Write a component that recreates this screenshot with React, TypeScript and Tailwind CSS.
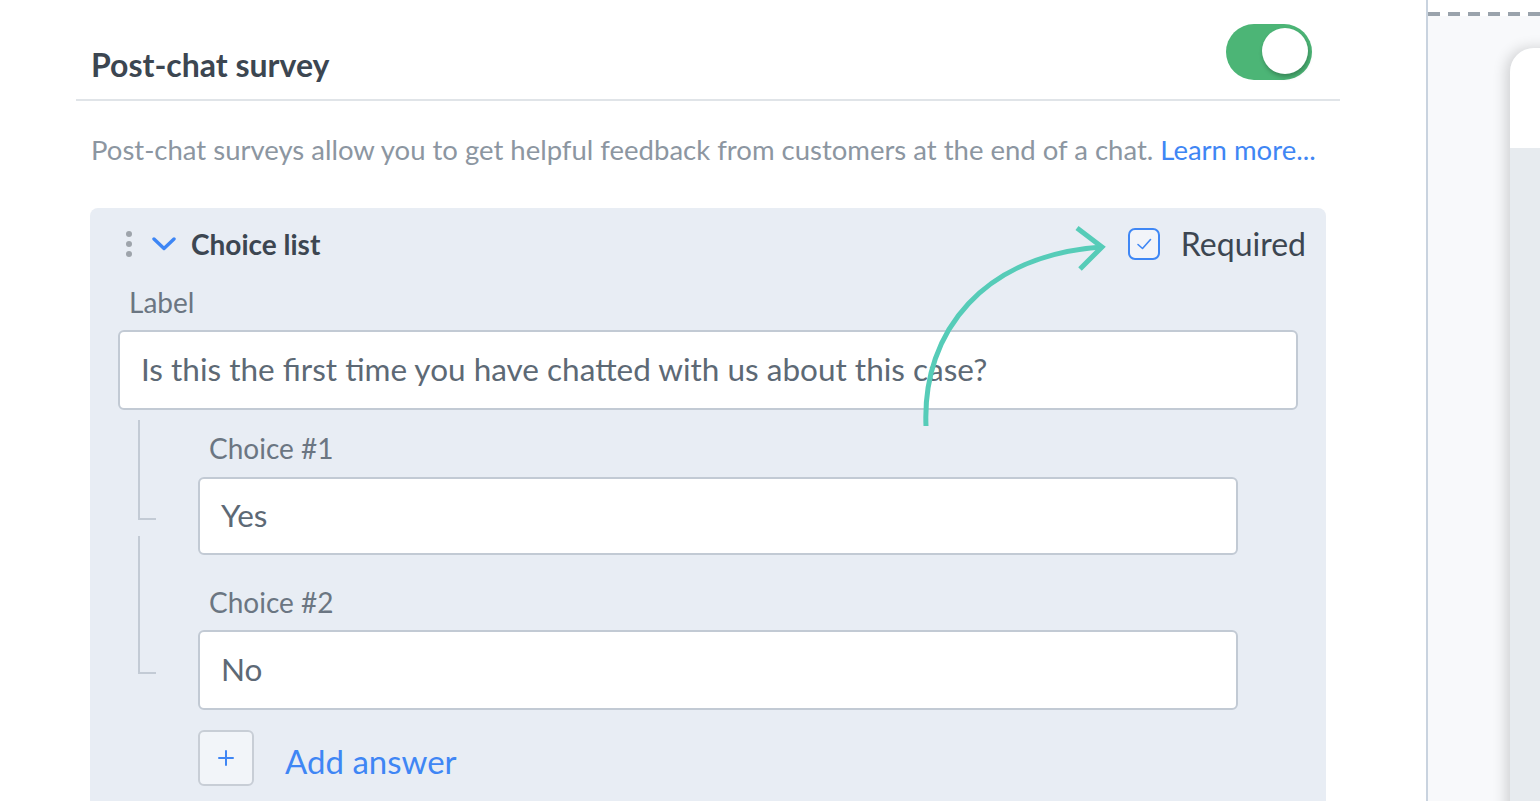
import React from "react";

function Toggle() {
  return (
    <div className="relative mt-[24px] h-[56px] w-[86px] rounded-full bg-[#4cb576]">
      <div className="absolute right-[4px] top-[4px] h-[46px] w-[46px] rounded-full bg-white shadow-[1px_3px_4px_rgba(0,0,0,0.25)]" />
    </div>
  );
}

function TextBox({ value, h }: { value: string; h: string }) {
  return (
    <div
      className={`flex ${h} items-center rounded-[6px] border-2 border-[#c2cad4] bg-white px-[21px] text-[31.5px] text-[#5d6975]`}
    >
      {value}
    </div>
  );
}

export default function App() {
  return (
    <div className="relative flex h-[801px] w-[1540px] overflow-hidden bg-white font-['Lato',sans-serif]">
      {/* Main editor column */}
      <div className="w-[1426px] shrink-0">
        <div className="ml-[76px] w-[1264px]">
          <div className="flex h-[101px] items-start justify-between border-b-2 border-[#e0e4e8] pl-[15px] pr-[28px]">
            <h1 className="mt-[47px] text-[32px] font-bold leading-[36px] text-[#3c4651]">
              Post-chat survey
            </h1>
            <Toggle />
          </div>

          <p className="mt-[31px] whitespace-nowrap pl-[15px] text-[27.5px] leading-[36px] text-[#8c96a1]">
            Post-chat surveys allow you to get helpful feedback from customers at the end of a chat.{" "}
            <span className="text-[#3f86f4]">Learn more...</span>
          </p>

          <div className="ml-[14px] mt-[40px] h-[700px] w-[1236px] rounded-t-[8px] bg-[#e8edf4]">
            {/* card header */}
            <div className="flex h-[72px] items-center pl-[36px] pr-[20px]">
              <div className="flex flex-col gap-[4px]">
                <span className="h-[6px] w-[6px] rounded-full bg-[#9ea4ab]" />
                <span className="h-[6px] w-[6px] rounded-full bg-[#9ea4ab]" />
                <span className="h-[6px] w-[6px] rounded-full bg-[#9ea4ab]" />
              </div>
              <svg className="ml-[20px]" width="24" height="14" viewBox="0 0 24 14" fill="none">
                <path d="M2 2 L12 11.5 L22 2" stroke="#3d86f5" strokeWidth="3.4" strokeLinecap="round" strokeLinejoin="round" />
              </svg>
              <span className="ml-[15px] text-[28px] font-bold leading-[36px] text-[#3c4651]">Choice list</span>
              <div className="ml-auto flex items-center">
                <div className="flex h-[32px] w-[32px] items-center justify-center rounded-[7px] border-2 border-[#3f87f5] bg-[#f2f4f9]">
                  <svg width="18" height="14" viewBox="0 0 18 14" fill="none">
                    <path d="M3 7.5 L7.5 11.5 L15.5 2.5" stroke="#3f87f5" strokeWidth="1.6" strokeLinecap="round" strokeLinejoin="round" />
                  </svg>
                </div>
                <span className="ml-[21px] text-[32px] leading-[40px] text-[#3c4651]">Required</span>
              </div>
            </div>

            {/* body */}
            <div className="px-[28px]">
              <div className="h-[44px] pl-[11px] text-[28px] leading-[44px] text-[#6b7682]">Label</div>
              <div className="mt-[6px]">
                <TextBox h="h-[80px]" value="Is this the first time you have chatted with us about this case?" />
              </div>

              <div className="pr-[60px]">
                {/* choice 1 */}
                <div className="flex">
                  <div className="w-[80px] shrink-0">
                    <div className="ml-[20px] mt-[10px] h-[100px] w-[18px] border-b-2 border-l-2 border-[#c3cbd5]" />
                  </div>
                  <div className="flex-1 pt-[18px]">
                    <div className="h-[40px] pl-[11px] text-[28px] leading-[40px] text-[#6b7682]">Choice #1</div>
                    <div className="mt-[9px]">
                      <TextBox h="h-[78px]" value="Yes" />
                    </div>
                  </div>
                </div>

                {/* choice 2 */}
                <div className="flex">
                  <div className="w-[80px] shrink-0">
                    <div className="ml-[20px] mt-[-19px] h-[138px] w-[18px] border-b-2 border-l-2 border-[#c3cbd5]" />
                  </div>
                  <div className="flex-1 pt-[27px]">
                    <div className="h-[40px] pl-[11px] text-[28px] leading-[40px] text-[#6b7682]">Choice #2</div>
                    <div className="mt-[8px]">
                      <TextBox h="h-[80px]" value="No" />
                    </div>
                  </div>
                </div>

                {/* add answer */}
                <div className="ml-[80px] mt-[20px] flex items-center">
                  <div className="flex h-[56px] w-[56px] items-center justify-center rounded-[6px] border-2 border-[#c8ced6] bg-[#f2f5f9]">
                    <svg width="18" height="18" viewBox="0 0 18 18" fill="none">
                      <path d="M9 2 V16 M2 9 H16" stroke="#3f86f4" strokeWidth="2" strokeLinecap="round" />
                    </svg>
                  </div>
                  <span className="ml-[31px] mt-[6px] text-[33px] leading-[40px] text-[#3f86f4]">Add answer</span>
                </div>
              </div>
            </div>
          </div>
        </div>
      </div>

      {/* Right preview panel */}
      <div className="flex min-w-0 flex-1 flex-col border-l-2 border-[#c9d3df] bg-white">
        <div className="h-[12px] shrink-0" />
        <div className="h-[4px] shrink-0 bg-[repeating-linear-gradient(90deg,#9aa3ac_0px,#9aa3ac_12px,transparent_12px,transparent_20px)]" />
        <div className="min-h-0 flex-1 overflow-hidden bg-[#f8f9fb] pl-[82px] pt-[32px]">
          <div className="h-[800px] w-[200px] overflow-hidden rounded-tl-[24px] bg-[#e7ebef] shadow-[-4px_0_14px_rgba(0,0,0,0.16)]">
            <div className="h-[100px] bg-white" />
          </div>
        </div>
      </div>

      {/* Annotation arrow */}
      <svg
        className="pointer-events-none absolute left-0 top-0"
        width="1540"
        height="801"
        viewBox="0 0 1540 801"
        fill="none"
      >
        <path
          d="M926 426 C 922 330, 985 255, 1102 247"
          stroke="#56ccb8"
          strokeWidth="5"
          fill="none"
        />
        <path d="M1077 228 L1102 247 L1080 269" stroke="#56ccb8" strokeWidth="5" fill="none" />
      </svg>
    </div>
  );
}
